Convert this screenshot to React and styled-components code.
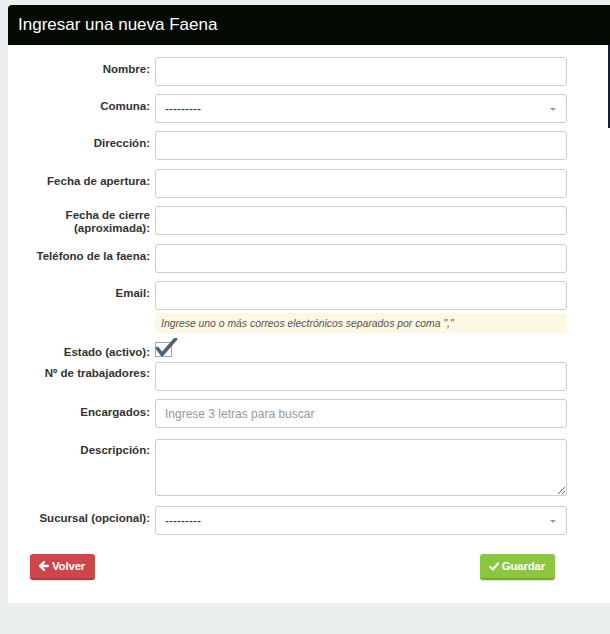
import React from "react";
import styled, { createGlobalStyle } from "styled-components";

const Global = createGlobalStyle`
  html, body { margin: 0; padding: 0; background: #ebeff0; }
  body { font-family: "Liberation Sans", Arial, sans-serif; color: #333; }
  * { box-sizing: border-box; }
`;

const Page = styled.div`
  padding: 5px 0 31px 8px;
  min-height: 634px;
`;

const Panel = styled.div`
  position: relative;
  background: #fff;
  border-top-left-radius: 4px;
  overflow: hidden;
`;

const Header = styled.div`
  height: 40px;
  background: #020a02;
  display: flex;
  align-items: center;
  padding-left: 10px;
`;

const Title = styled.h1`
  margin: 0;
  font-size: 17px;
  font-weight: normal;
  color: #fff;
  font-family: "Liberation Sans", Arial, sans-serif;
`;

const ScrollEdge = styled.div`
  position: absolute;
  top: 40px;
  right: 0;
  width: 2px;
  height: 83px;
  background: #1b1e3a;
`;

const Form = styled.form`
  padding: 12px 43px 23px 0;
  display: flex;
  flex-direction: column;
`;

const Row = styled.div`
  display: grid;
  grid-template-columns: 142px 1fr;
  column-gap: 5px;
  margin-top: ${(p) => p.$mt ?? 8}px;
  &:first-child { margin-top: 0; }
`;

const Label = styled.label`
  text-align: right;
  font-weight: bold;
  font-size: 11.5px;
  line-height: 13px;
  color: #333;
  padding-top: ${(p) => p.$pt ?? 6}px;
`;

const Input = styled.input`
  height: 29px;
  width: 100%;
  border: 1px solid #ccc;
  border-radius: 3px;
  padding: 0 9px;
  font-size: 12px;
  font-family: "Liberation Sans", Arial, sans-serif;
  &::placeholder { color: #999; }
`;

const SelectBox = styled.div`
  height: 29px;
  border: 1px solid #ccc;
  border-radius: 3px;
  display: flex;
  align-items: center;
  justify-content: space-between;
  padding: 0 10px 0 9px;
  font-size: 12px;
  color: #333;
`;

const Caret = styled.span`
  width: 0;
  height: 0;
  border-left: 3px solid transparent;
  border-right: 3px solid transparent;
  border-top: 3px solid #999;
  margin-top: 1px;
`;

const TextArea = styled.textarea`
  height: 57px;
  width: 100%;
  border: 1px solid #ccc;
  border-radius: 3px;
  resize: vertical;
  font-family: "Liberation Sans", Arial, sans-serif;
  display: block;
`;

const Help = styled.div`
  grid-column: 2;
  height: 20px;
  background: #fcf8e3;
  font-style: italic;
  font-size: 10.4px;
  color: #555;
  display: flex;
  align-items: center;
  padding-left: 6px;
`;

const CheckWrap = styled.div`
  height: 19px;
  display: flex;
  align-items: flex-start;
`;

const Buttons = styled.div`
  display: flex;
  justify-content: space-between;
  padding: 0 12px 0 22px;
  margin-top: 19px;
`;

const Button = styled.button`
  height: 26px;
  border: none;
  border-radius: 3px;
  border-bottom: 2px solid ${(p) => p.$shade};
  background: ${(p) => p.$bg};
  color: #fff;
  font-family: "Liberation Sans Narrow", "Liberation Sans", Arial, sans-serif;
  font-weight: bold;
  font-size: 11.5px;
  letter-spacing: -0.2px;
  padding: 0 10px 0 9px;
  display: inline-flex;
  align-items: center;
  gap: 3px;
  box-shadow: 0 1px 2px rgba(0,0,0,0.12);
`;

const Field = ({ label, pt, mt }) => (
  <Row $mt={mt}>
    <Label $pt={pt}>{label}</Label>
    <Input type="text" />
  </Row>
);

const SelectField = ({ label, mt }) => (
  <Row $mt={mt}>
    <Label>{label}</Label>
    <SelectBox>
      <span>---------</span>
      <Caret />
    </SelectBox>
  </Row>
);

export default function App() {
  return (
    <>
      <Global />
      <Page>
        <Panel>
          <Header>
            <Title>Ingresar una nueva Faena</Title>
          </Header>
          <ScrollEdge />
          <Form onSubmit={(e) => e.preventDefault()}>
            <Field label="Nombre:" />
            <SelectField label="Comuna:" />
            <Field label="Dirección:" />
            <Field label="Fecha de apertura:" mt={9} />
            <Field label="Fecha de cierre (aproximada):" pt={3} />
            <Field label="Teléfono de la faena:" mt={9} />
            <Field label="Email:" />
            <Row $mt={3}>
              <Help>Ingrese uno o más correos electrónicos separados por coma ","</Help>
            </Row>
            <Row $mt={5}>
              <Label $pt={8}>Estado (activo):</Label>
              <CheckWrap>
                <svg width="24" height="20" viewBox="0 0 24 20">
                  <rect x="0.5" y="4.5" width="16" height="14" fill="#fff" stroke="#9aa5ad" strokeWidth="1" />
                  <path d="M2.5 10.5 L7 16.5 L20.5 1" fill="none" stroke="#4e6577" strokeWidth="3.6" strokeLinecap="round" strokeLinejoin="round" />
                </svg>
              </CheckWrap>
            </Row>
            <Field label="Nº de trabajadores:" mt={3} pt={5} />
            <Row $mt={8}>
              <Label $pt={7}>Encargados:</Label>
              <Input type="text" placeholder="Ingrese 3 letras para buscar" />
            </Row>
            <Row $mt={11}>
              <Label $pt={5}>Descripción:</Label>
              <TextArea />
            </Row>
            <SelectField label="Sucursal (opcional):" mt={10} />
            <Buttons>
              <Button type="button" $bg="#d0454a" $shade="#b23a3d">
                <svg width="10" height="10" viewBox="0 0 10 10">
                  <path d="M1 5 L5 1.2 M1 5 L5 8.8 M1.2 5 L9 5" stroke="#fff" strokeWidth="2.4" strokeLinecap="round" fill="none" />
                </svg>
                Volver
              </Button>
              <Button type="button" $bg="#8cc63e" $shade="#76ab2f">
                <svg width="10" height="9" viewBox="0 0 10 9">
                  <path d="M1 4.8 L3.8 7.4 L9 1.5" stroke="#fff" strokeWidth="2.2" strokeLinecap="round" strokeLinejoin="round" fill="none" />
                </svg>
                Guardar
              </Button>
            </Buttons>
          </Form>
        </Panel>
      </Page>
    </>
  );
}
